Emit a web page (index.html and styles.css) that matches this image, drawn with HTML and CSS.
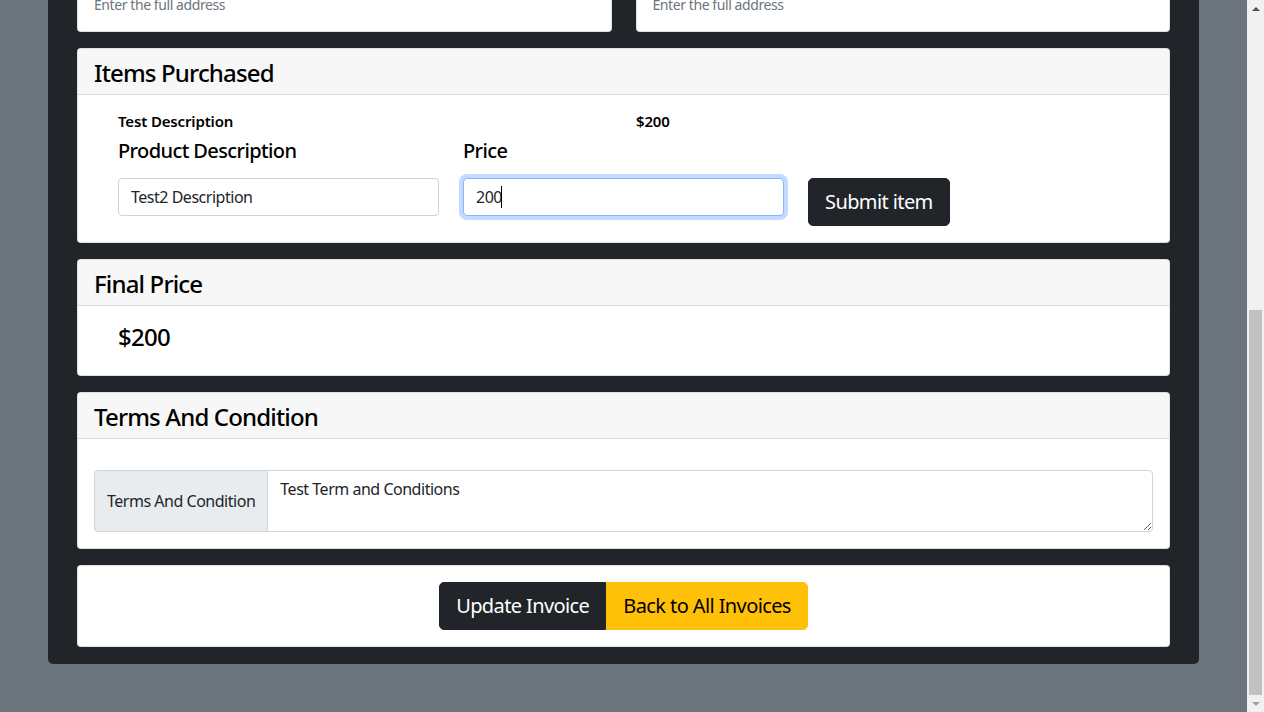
FILE: index.html
```html
<!DOCTYPE html>
<html lang="en">
<head>
<meta charset="utf-8">
<title>Edit Invoice</title>
<link rel="stylesheet" href="styles.css">
</head>
<body>
<div class="viewport">
  <main class="page">
    <div class="shell">
      <h2 class="page-title">Edit Invoice</h2>

      <div class="grid-2">
        <section class="card">
          <div class="card-header"><h4 class="card-title">Bill From</h4></div>
          <div class="card-body">
            <label class="form-label">Name</label>
            <input class="form-control" type="text" value="Test Company">
            <label class="form-label">Address</label>
            <input class="form-control" type="text" value="Test Street 1">
            <div class="form-text">Enter the full address</div>
          </div>
        </section>
        <section class="card">
          <div class="card-header"><h4 class="card-title">Bill To</h4></div>
          <div class="card-body">
            <label class="form-label">Name</label>
            <input class="form-control" type="text" value="Test Customer">
            <label class="form-label">Address</label>
            <input class="form-control" type="text" value="Test Avenue 2">
            <div class="form-text">Enter the full address</div>
          </div>
        </section>
      </div>

      <section class="card">
        <div class="card-header"><h4 class="card-title">Items Purchased</h4></div>
        <div class="card-body items-body">
          <div class="item-row">
            <span>Test Description</span>
            <span>$200</span>
          </div>
          <div class="item-form">
            <div class="field">
              <label class="field-label" for="desc">Product Description</label>
              <input class="form-control" id="desc" type="text" value="Test2 Description">
            </div>
            <div class="field">
              <label class="field-label" for="price">Price</label>
              <div class="input-wrap">
                <input class="form-control is-focused" id="price" type="text" value="200">
                <span class="caret"></span>
              </div>
            </div>
            <div class="field field-action">
              <button class="btn btn-dark btn-lg" type="button">Submit item</button>
            </div>
          </div>
        </div>
      </section>

      <section class="card">
        <div class="card-header"><h4 class="card-title">Final Price</h4></div>
        <div class="card-body price-body">
          <h4 class="total">$200</h4>
        </div>
      </section>

      <section class="card">
        <div class="card-header"><h4 class="card-title">Terms And Condition</h4></div>
        <div class="card-body">
          <div class="input-group">
            <span class="input-group-text">Terms And Condition</span>
            <textarea class="form-control textarea" rows="2">Test Term and Conditions</textarea>
          </div>
        </div>
      </section>

      <section class="card">
        <div class="card-body actions">
          <div class="btn-group">
            <button class="btn btn-dark btn-lg" type="button">Update Invoice</button>
            <button class="btn btn-warning btn-lg" type="button">Back to All Invoices</button>
          </div>
        </div>
      </section>
    </div>
  </main>
</div>
<div class="scrollbar" aria-hidden="true">
  <div class="sb-arrow sb-up"></div>
  <div class="sb-track"><div class="sb-thumb"></div></div>
  <div class="sb-arrow sb-down"></div>
</div>
</body>
</html>
```
FILE: styles.css
```css
*, *::before, *::after {
  box-sizing: border-box;
  letter-spacing: -0.03em;
}

html, body {
  height: 100%;
  margin: 0;
  overflow: hidden;
}

body {
  display: flex;
  font-family: "Noto Sans", "Open Sans", sans-serif;
  font-size: 16px;
  line-height: 1.5;
  color: #212529;
  background: #6c757d;
}

.viewport {
  flex: 1;
  height: 712px;
  overflow: hidden;
  display: flex;
  flex-direction: column;
  justify-content: flex-end;
}

.page {
  padding: 0 48px 48px;
}

.shell {
  background: #212529;
  padding: 16px 29px 17px;
  border-radius: 0 0 5px 5px;
}

.page-title {
  margin: 0 0 16px;
  color: #fff;
  font-size: 32px;
  font-weight: 500;
  text-align: center;
}

.grid-2 {
  display: grid;
  grid-template-columns: 1fr 1fr;
  column-gap: 24px;
}

.card {
  background: #fff;
  border: 1px solid rgba(0, 0, 0, .125);
  border-radius: 4px;
  margin-bottom: 16px;
}

.shell > .card:last-child { margin-bottom: 0; }

.card-header {
  background: rgba(0, 0, 0, .03);
  border-bottom: 1px solid rgba(0, 0, 0, .125);
  padding: 9px 16px 7px;
  border-radius: 3px 3px 0 0;
}

.card-title {
  margin: 0;
  font-size: 24px;
  font-weight: 500;
  line-height: 29px;
  letter-spacing: -0.035em;
  color: #000;
}

.card-body {
  padding: 16px;
}

.form-label {
  display: block;
  margin: 0 0 8px;
}

.form-control {
  display: block;
  width: 100%;
  padding: 6px 12px;
  font: inherit;
  font-size: 16px;
  line-height: 24px;
  color: #212529;
  background: #fff;
  border: 1px solid #ced4da;
  border-radius: 4px;
  margin: 0;
}

.card-body > .form-control { margin-bottom: 16px; }
.card-body > .form-control:last-of-type { margin-bottom: 0; }

.form-text {
  margin-top: 4px;
  font-size: 14px;
  line-height: 21px;
  color: #6c757d;
}

.items-body {
  padding: 16px 16px 16px 40px;
}

.item-row {
  display: grid;
  grid-template-columns: 518px 1fr;
  font-size: 15px;
  font-weight: 600;
  line-height: 20px;
  padding-bottom: 4px;
  color: #000;
}

.item-row span { letter-spacing: -0.01em; }

.item-form {
  display: grid;
  grid-template-columns: 321px 321px auto;
  column-gap: 24px;
  align-items: start;
}

.field-label {
  display: block;
  margin-bottom: 13px;
  padding-top: 1px;
  font-size: 20px;
  font-weight: 500;
  line-height: 29px;
  color: #000;
}

.field-action {
  padding-top: 43px;
}

.input-wrap {
  position: relative;
}

.caret {
  position: absolute;
  left: 38px;
  top: 8px;
  width: 1px;
  height: 22px;
  background: #000;
}

.form-control.is-focused {
  border-color: #86b7fe;
  outline: 0;
  box-shadow: 0 0 0 4px rgba(13, 110, 253, .25);
}

.btn {
  display: inline-block;
  font: inherit;
  border: 1px solid transparent;
  cursor: pointer;
  margin: 0;
}

.btn-lg {
  padding: 8px 16px;
  font-size: 20px;
  line-height: 30px;
  border-radius: 5px;
}

.btn-dark {
  color: #fff;
  background: #212529;
  border-color: #212529;
}

.btn-warning {
  color: #000;
  background: #ffc107;
  border-color: #ffc107;
}

.price-body {
  padding: 16px 16px 16px 40px;
}

.total {
  margin: 0 0 8px;
  font-size: 24px;
  font-weight: 500;
  line-height: 29px;
  color: #000;
}

.input-group {
  display: flex;
  align-items: stretch;
  margin-top: 15px;
}

.input-group-text {
  display: flex;
  align-items: center;
  padding: 6px 12px;
  font-size: 16px;
  line-height: 24px;
  color: #212529;
  background: #e9ecef;
  border: 1px solid #ced4da;
  border-radius: 4px 0 0 4px;
  white-space: nowrap;
}

.textarea {
  flex: 1;
  width: auto;
  min-width: 0;
  margin-left: -1px;
  border-radius: 0 4px 4px 0;
  resize: vertical;
  height: 62px;
}

.actions {
  display: flex;
  justify-content: center;
}

.btn-group {
  display: inline-flex;
}

.btn-group .btn:first-child { border-radius: 5px 0 0 5px; }
.btn-group .btn:last-child { border-radius: 0 5px 5px 0; }

.scrollbar {
  width: 17px;
  height: 712px;
  flex: none;
  background: #f1f1f1;
  display: flex;
  flex-direction: column;
}

.sb-arrow {
  height: 17px;
  flex: none;
  display: flex;
  align-items: center;
  justify-content: center;
}

.sb-arrow::before {
  content: "";
  border-left: 4px solid transparent;
  border-right: 4px solid transparent;
}

.sb-up::before { border-bottom: 4px solid #505050; }
.sb-down::before { border-top: 4px solid #a3a3a3; }

.sb-track {
  flex: 1;
  display: flex;
  flex-direction: column;
  justify-content: flex-end;
}

.sb-thumb {
  height: 385px;
  margin: 0 2px;
  background: #c1c1c1;
}
```
